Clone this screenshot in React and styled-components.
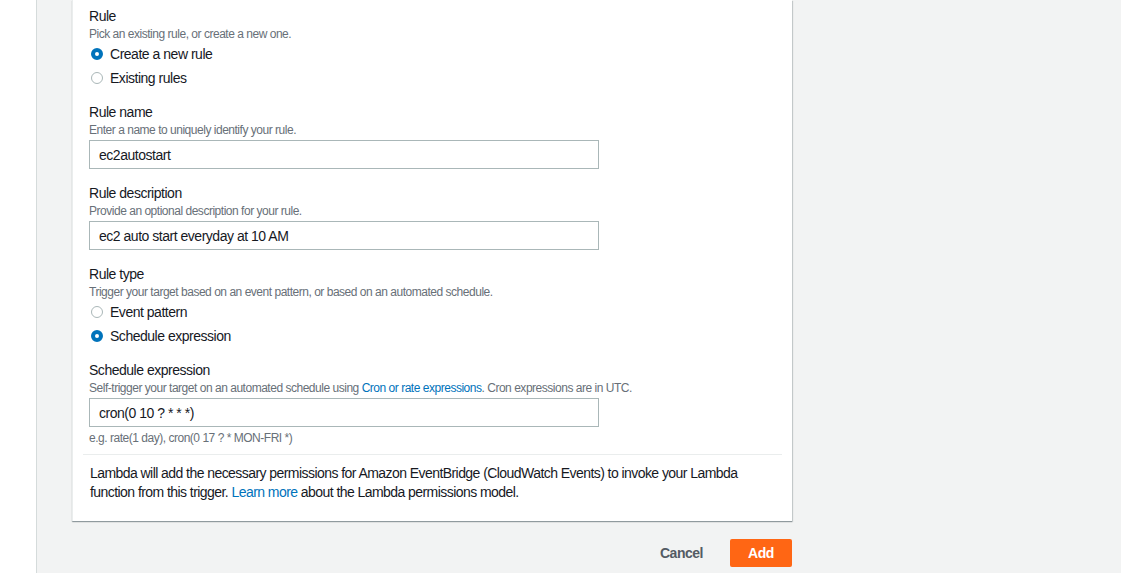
import styled, { createGlobalStyle } from "styled-components";

const GlobalStyle = createGlobalStyle`
  body {
    margin: 0;
    font-family: "Liberation Sans", Arial, sans-serif;
    letter-spacing: -0.03em;
    color: #16191f;
    background: #f2f3f3;
  }
`;

const Field = ({ label, description, variant, children }) => (
  <FieldWrap variant={variant}>
    <Label>{label}</Label>
    {description && <Description>{description}</Description>}
    {children}
  </FieldWrap>
);

const Radio = ({ checked, children }) => (
  <RadioRow>
    <RadioDot checked={checked} />
    <RadioText>{children}</RadioText>
  </RadioRow>
);

const App = () => {
  return (
    <>
      <GlobalStyle />
      <Page>
        <SideStrip />
        <Main>
          <Panel>
            <Field variant="radio" label="Rule" description="Pick an existing rule, or create a new one.">
              <RadioGroup>
                <Radio checked>Create a new rule</Radio>
                <Radio>Existing rules</Radio>
              </RadioGroup>
            </Field>
            <Field label="Rule name" description="Enter a name to uniquely identify your rule.">
              <Input defaultValue="ec2autostart" />
            </Field>
            <Field label="Rule description" description="Provide an optional description for your rule.">
              <Input defaultValue="ec2 auto start everyday at 10 AM" />
            </Field>
            <Field
              variant="radio"
              label="Rule type"
              description="Trigger your target based on an event pattern, or based on an automated schedule."
            >
              <RadioGroup>
                <Radio>Event pattern</Radio>
                <Radio checked>Schedule expression</Radio>
              </RadioGroup>
            </Field>
            <Field
              variant="last"
              label="Schedule expression"
              description={
                <>
                  Self-trigger your target on an automated schedule using{" "}
                  <Link>Cron or rate expressions</Link>. Cron expressions are in UTC.
                </>
              }
            >
              <Input defaultValue="cron(0 10 ? * * *)" />
              <Hint>e.g. rate(1 day), cron(0 17 ? * MON-FRI *)</Hint>
            </Field>
            <Divider />
            <Note>
              Lambda will add the necessary permissions for Amazon EventBridge (CloudWatch Events) to invoke your Lambda
              function from this trigger. <Link>Learn more</Link> about the Lambda permissions model.
            </Note>
          </Panel>
          <Actions>
            <CancelButton>Cancel</CancelButton>
            <AddButton>Add</AddButton>
          </Actions>
        </Main>
      </Page>
    </>
  );
};

export default App;

const Page = styled.div`
  display: flex;
  min-height: 573px;
  overflow: hidden;
`;

const SideStrip = styled.div`
  width: 36px;
  flex-shrink: 0;
  background: #fff;
  border-right: 1px solid #d5dbdb;
`;

const Main = styled.div`
  padding-left: 35px;
  width: 720px;
`;

const Panel = styled.div`
  background: #fff;
  border-left: 1px solid #eaeded;
  box-shadow: 0 1px 1px 0 rgba(0, 28, 36, 0.3), 1px 1px 1px 0 rgba(0, 28, 36, 0.15);
  padding: 7px 10px 19px;
  display: flex;
  flex-direction: column;
`;

const fieldGap = { radio: "16px", last: "8px" };

const FieldWrap = styled.div`
  padding: 0 6px ${({ variant }) => fieldGap[variant] || "15px"};
  display: flex;
  flex-direction: column;
`;

const Label = styled.div`
  font-size: 14px;
  line-height: 18px;
`;

const Description = styled.div`
  font-size: 12px;
  line-height: 16px;
  color: #687078;
  margin: 1px 0 2px;
`;

const Hint = styled.div`
  font-size: 12px;
  line-height: 16px;
  color: #687078;
  margin-top: 3px;
`;

const Link = styled.span`
  color: #0073bb;
`;

const RadioGroup = styled.div`
  display: flex;
  flex-direction: column;
  gap: 6px;
  margin-top: 1px;
`;

const RadioRow = styled.div`
  display: flex;
  align-items: center;
  gap: 7px;
  height: 18px;
`;

const RadioDot = styled.span`
  width: 12px;
  height: 12px;
  border-radius: 50%;
  box-sizing: border-box;
  margin-left: 2px;
  border: ${({ checked }) => (checked ? "4px solid #0073bb" : "1px solid #aab7b8")};
  background: #fff;
`;

const RadioText = styled.span`
  font-size: 14px;
`;

const Input = styled.input`
  width: 510px;
  height: 29px;
  box-sizing: border-box;
  border: 1px solid #aab7b8;
  padding: 0 9px;
  font-family: inherit;
  letter-spacing: inherit;
  font-size: 14px;
  color: #16191f;
  outline: none;
`;

const Divider = styled.hr`
  border: none;
  border-top: 1px solid #eaeded;
  margin: 0 0 9px;
`;

const Note = styled.p`
  margin: 0;
  padding: 0 7px;
  font-size: 14px;
  line-height: 19px;
  letter-spacing: -0.04em;
`;

const Actions = styled.div`
  display: flex;
  justify-content: flex-end;
  align-items: center;
  gap: 27px;
  margin-top: 18px;
`;

const CancelButton = styled.button`
  background: none;
  border: none;
  font-family: inherit;
  letter-spacing: inherit;
  font-size: 14px;
  font-weight: bold;
  color: #545b64;
  padding: 0;
`;

const AddButton = styled.button`
  background: #ff6614;
  border: none;
  border-radius: 2px;
  width: 62px;
  height: 28px;
  font-family: inherit;
  letter-spacing: inherit;
  font-size: 14px;
  font-weight: bold;
  color: #fff;
`;
